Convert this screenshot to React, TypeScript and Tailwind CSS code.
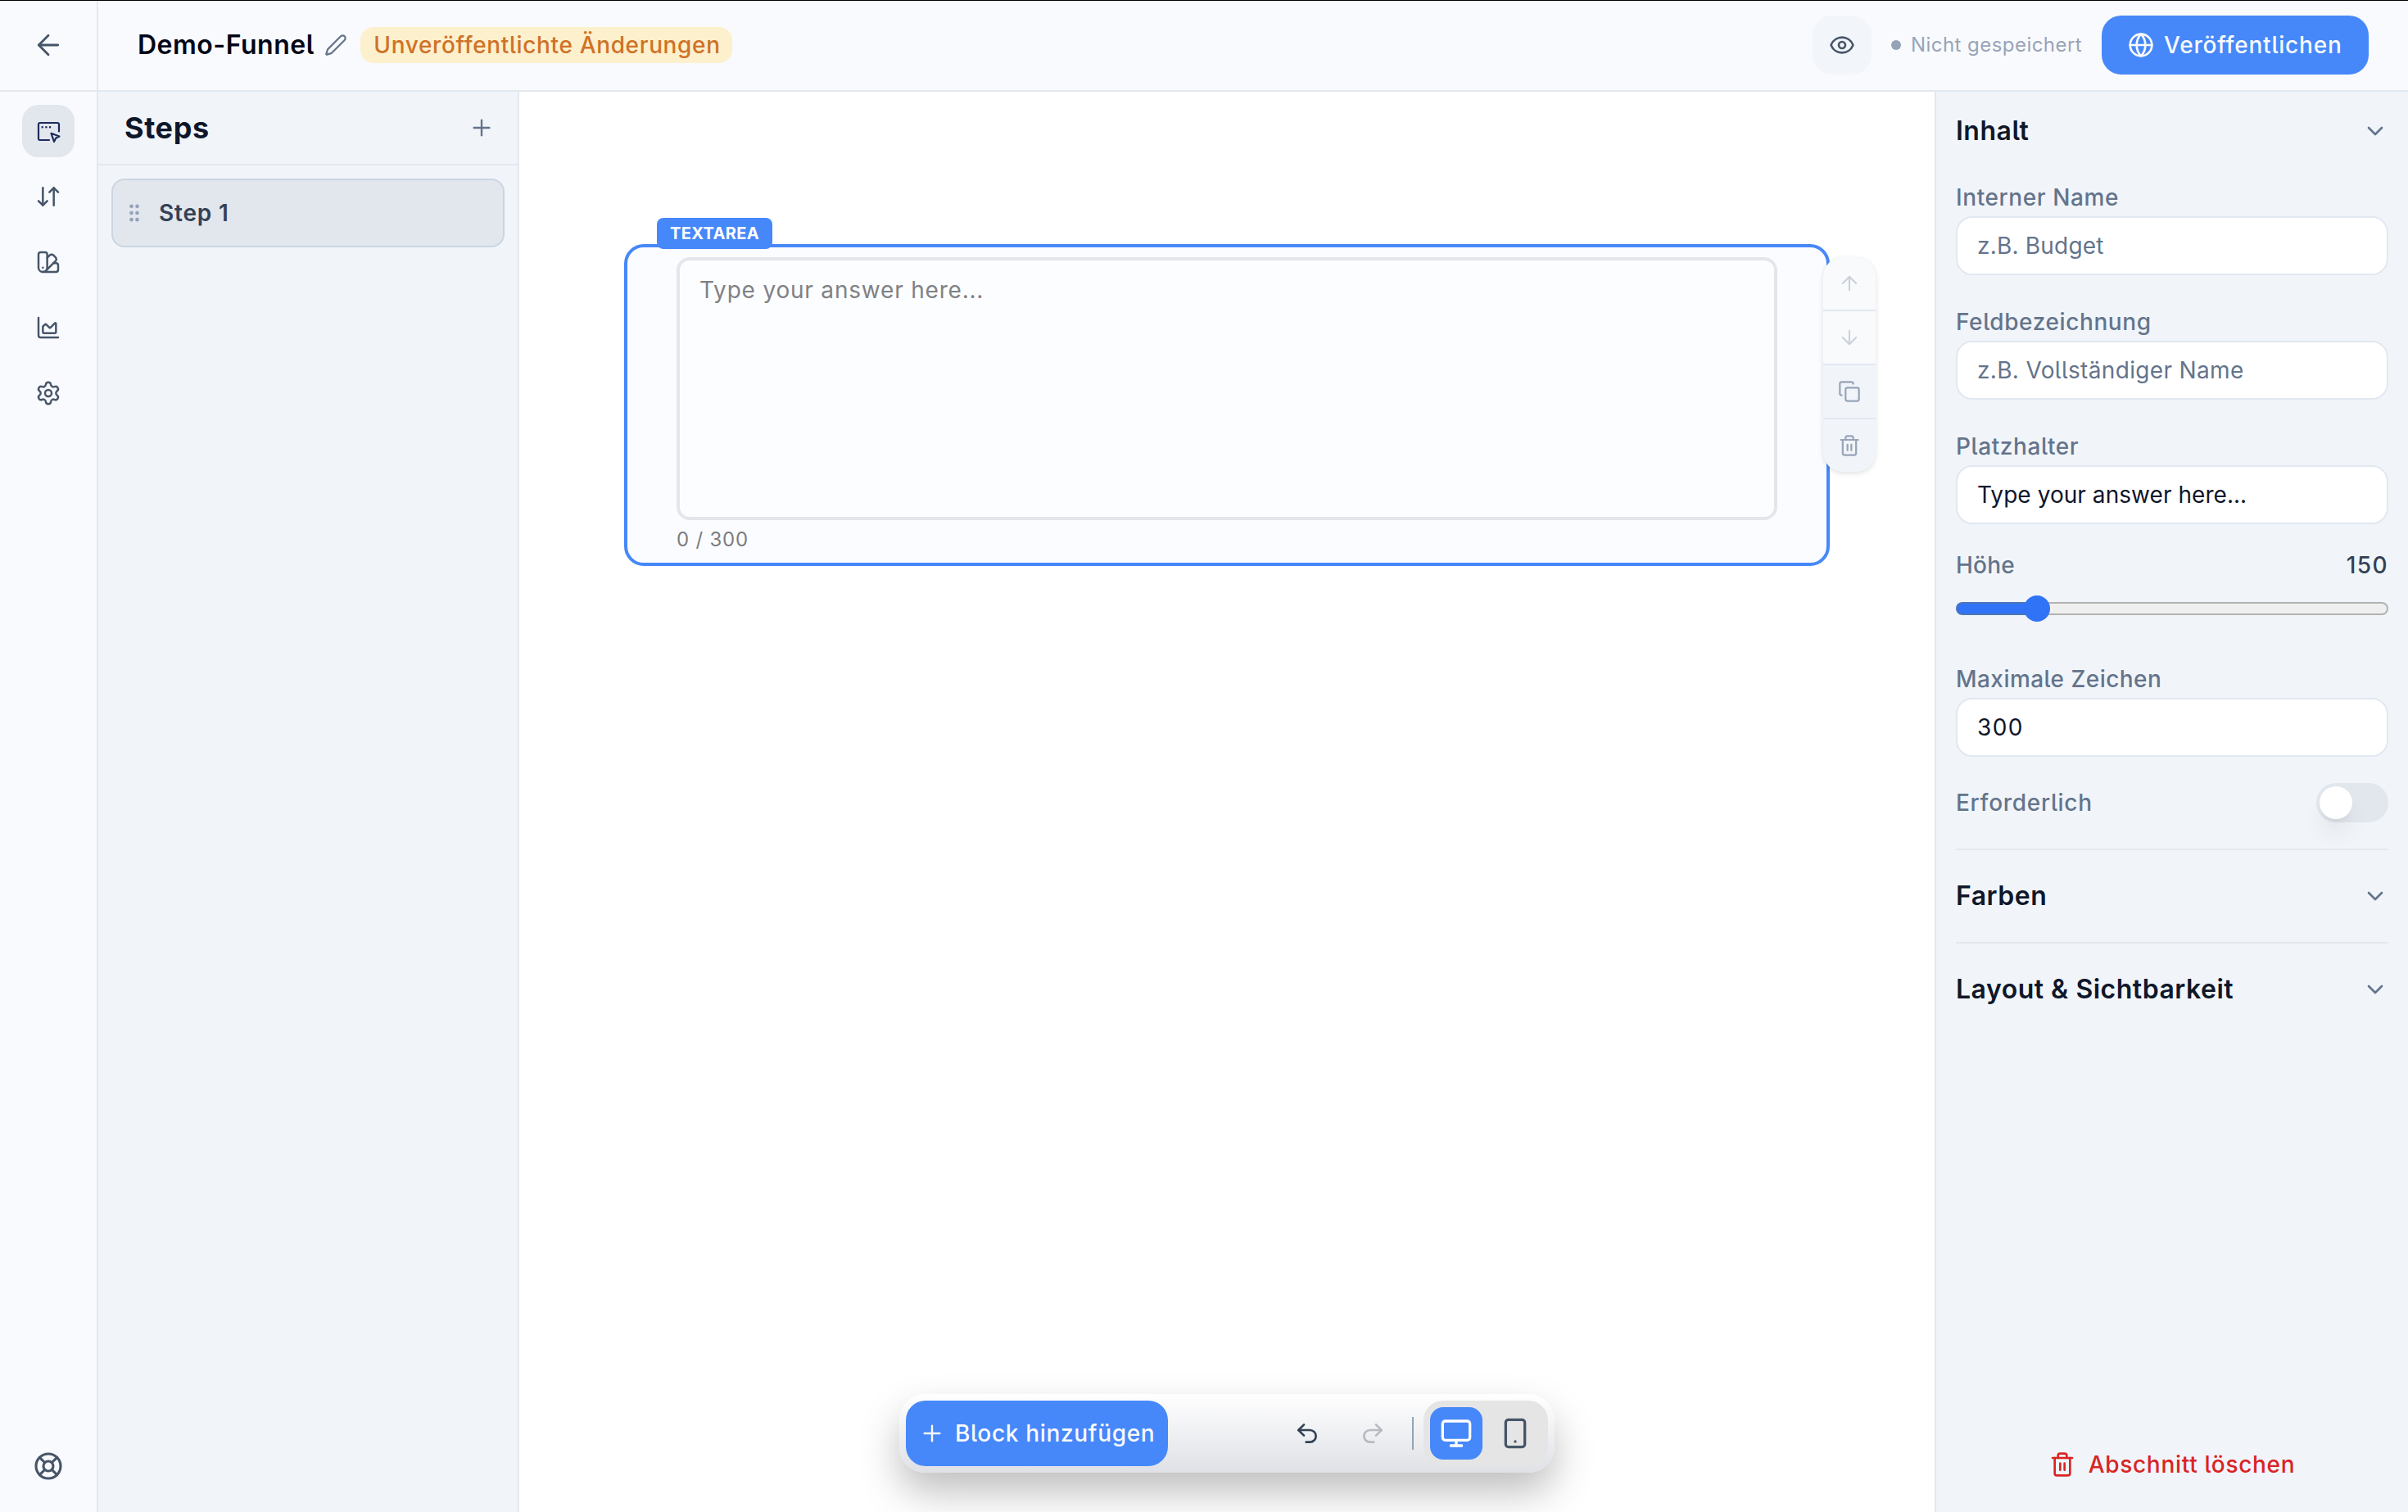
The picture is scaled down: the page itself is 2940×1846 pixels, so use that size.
import type { ReactNode } from "react";
import {
  ArrowDown,
  ArrowDownUp,
  ArrowLeft,
  ArrowUp,
  ChartArea,
  ChevronDown,
  Copy,
  Eye,
  Globe,
  GripVertical,
  LifeBuoy,
  Monitor,
  Plus,
  Redo2,
  Settings,
  Smartphone,
  SwatchBook,
  Trash2,
  Undo2,
} from "lucide-react";
import { clsx } from "clsx";

function PencilIcon() {
  return (
    <svg width="28" height="28" viewBox="0 0 24 24" fill="none" stroke="#64748b" strokeWidth="1.9" strokeLinejoin="round" className="shrink-0">
      <path d="M21.174 6.812a1 1 0 0 0-3.986-3.987L3.842 16.174a2 2 0 0 0-.5.83l-1.321 4.352a.5.5 0 0 0 .623.622l4.353-1.32a2 2 0 0 0 .83-.497z" />
    </svg>
  );
}

function BuilderIcon() {
  return (
    <svg width="32" height="32" viewBox="0 0 32 32" fill="none" stroke="#1e2b5c" strokeWidth="2.2" strokeLinecap="round" strokeLinejoin="round">
      <path d="M17 27H5.8A1.8 1.8 0 0 1 4 25.2V7.8A1.8 1.8 0 0 1 5.8 6H27.2A1.8 1.8 0 0 1 29 7.8V16.5" />
      <path d="M19.5 18.8 29.5 22.5 25.3 24.6 23 29Z" />
      <path d="M8.7 11.2h.01M13.4 11.2h.01M18 11.2h.01" strokeWidth="2.5" />
    </svg>
  );
}

interface NavItem {
  id: string;
  icon: ReactNode;
}

const navItems: NavItem[] = [
  { id: "builder", icon: <BuilderIcon /> },
  { id: "flow", icon: <ArrowDownUp size={32} strokeWidth={1.9} /> },
  { id: "design", icon: <SwatchBook size={32} strokeWidth={1.85} /> },
  { id: "analytics", icon: <ChartArea size={32} strokeWidth={1.85} /> },
  { id: "settings", icon: <Settings size={32} strokeWidth={1.85} /> },
];

function Header() {
  return (
    <header className="flex h-[112px] shrink-0 border-t border-b-2 border-t-black border-b-[#e2e8f0] bg-[#f9fafd]">
      <div className="flex w-[120px] items-center justify-center border-r-2 border-[#e2e8f0] pb-px">
        <ArrowLeft size={40} strokeWidth={1.7} className="text-[#475569]" />
      </div>
      <div className="flex flex-1 items-center pr-12 pb-px pl-12">
        <h1 className="w-[218px] text-[32px] font-semibold tracking-[0.5px] whitespace-nowrap text-[#020617]">Demo-Funnel</h1>
        <div className="mr-4 ml-[10px]">
          <PencilIcon />
        </div>
        <span className="flex h-11 w-[454px] items-center justify-center rounded-2xl bg-[#fcf0cd] pl-0.5 text-[28px] font-medium tracking-[0.64px] text-[#cf7227]">
          Unveröffentlichte Änderungen
        </span>
        <button className="ml-auto flex size-[72px] items-center justify-center rounded-3xl bg-[#f2f5fa] text-[#475569]">
          <Eye size={32} strokeWidth={2} />
        </button>
        <span className="mr-3 ml-6 size-3 rounded-full bg-[#94a3b8]" />
        <span className="w-[233px] text-[24px] tracking-[0.45px] text-[#98a4b8]">Nicht gespeichert</span>
        <button className="flex h-[72px] w-[326px] items-center gap-3 rounded-3xl bg-[#4688f9] pl-8 text-[28px] font-medium tracking-[0.8px] text-[#f8fafc]">
          <Globe size={32} strokeWidth={2} className="shrink-0" />
          Veröffentlichen
        </button>
      </div>
    </header>
  );
}

function NavRail() {
  return (
    <nav className="flex w-[120px] shrink-0 flex-col items-center gap-4 border-r-2 border-[#e2e8f0] bg-[#f9fafd] pt-4 pb-6 text-[#475569]">
      {navItems.map((item, index) => (
        <button
          key={item.id}
          className={clsx("flex size-16 items-center justify-center rounded-[20px]", index === 0 && "bg-[#e2e7ee]")}
        >
          {item.icon}
        </button>
      ))}
      <button className="mt-auto flex size-16 items-center justify-center">
        <LifeBuoy size={36} strokeWidth={2.1} />
      </button>
    </nav>
  );
}

function StepsPanel() {
  return (
    <aside className="w-[514px] shrink-0 border-r-2 border-[#e2e8f0] bg-[#f1f5fa]">
      <div className="flex h-[90px] items-center justify-between border-b-2 border-[#e2e8f0] pr-7 pl-8">
        <h2 className="pb-px text-[36px] font-bold tracking-[0.6px] text-[#0f172a]">Steps</h2>
        <Plus size={32} strokeWidth={1.8} className="text-[#64748b]" />
      </div>
      <div className="p-4">
        <div className="flex h-[84px] items-center rounded-2xl border-2 border-[#cbd5e1] bg-[#e2e7ee] pl-3">
          <GripVertical size={28} strokeWidth={2} className="text-[#94a3b8]" />
          <span className="ml-4 text-[28px] font-semibold tracking-[0.8px] text-[#334155]">Step 1</span>
        </div>
      </div>
    </aside>
  );
}

function BlockActions() {
  return (
    <div className="absolute top-3 -right-[60px] flex w-16 flex-col gap-0.5 overflow-hidden rounded-3xl bg-[#e2e8f0] text-[#98a4b8] shadow-[0_2px_6px_rgba(0,0,0,0.12)]">
      <button className="flex h-16 items-center justify-center bg-[#f9fafc] text-[#cad1dc]">
        <ArrowUp size={28} strokeWidth={1.8} />
      </button>
      <button className="flex h-16 items-center justify-center bg-[#f9fafc] text-[#cad1dc]">
        <ArrowDown size={28} strokeWidth={1.8} />
      </button>
      <button className="flex h-16 items-center justify-center bg-[#f1f5fa]">
        <Copy size={28} strokeWidth={1.9} />
      </button>
      <button className="flex h-16 items-center justify-center bg-[#f1f5fa]">
        <Trash2 size={28} strokeWidth={1.9} />
      </button>
    </div>
  );
}

function Toolbar() {
  return (
    <div className="absolute bottom-12 left-1/2 flex h-24 w-[800px] -translate-x-1/2 items-center rounded-[32px] bg-linear-to-b from-white to-[#dfe1e6] px-2 shadow-[0_24px_48px_rgba(0,0,0,0.25)]">
      <button className="flex h-20 w-80 items-center gap-3 rounded-3xl bg-[#4688f9] pl-4 text-[28px] font-medium tracking-[0.68px] text-[#f8fafc]">
        <Plus size={32} strokeWidth={1.8} className="shrink-0" />
        Block hinzufügen
      </button>
      <div className="ml-auto flex items-center">
        <button className="flex size-16 items-center justify-center text-[#334155]">
          <Undo2 size={32} strokeWidth={2} />
        </button>
        <button className="ml-4 flex size-16 items-center justify-center text-[#b7bac2]">
          <Redo2 size={32} strokeWidth={2} />
        </button>
        <div className="mr-3 ml-4 h-10 w-0.5 bg-[#94a3b8]" />
        <div className="flex h-20 w-[152px] items-center gap-2 rounded-3xl bg-[#e5e5e5] px-2">
          <button className="flex size-16 items-center justify-center rounded-2xl bg-[#4688f9] text-white">
            <Monitor size={40} strokeWidth={2} />
          </button>
          <button className="flex size-16 items-center justify-center text-[#475569]">
            <Smartphone size={40} strokeWidth={2} />
          </button>
        </div>
      </div>
    </div>
  );
}

function Canvas() {
  return (
    <main className="relative flex-1 bg-white">
      <div className="relative mx-32 mt-[186px] h-[393px] rounded-3xl border-4 border-[#4688f9] bg-[#fbfcff] px-[60px] pt-3">
        <span className="absolute -top-9 left-9 flex h-[38px] w-[141px] items-center justify-center rounded-lg bg-[#4688f9] text-[20px] font-bold tracking-[0.35px] text-white">
          TEXTAREA
        </span>
        <div className="h-[321px] rounded-2xl border-4 border-[#e4e6eb] bg-[#fcfdff] px-6 pt-4 text-[28px] leading-10 tracking-[0.8px] text-[#808184]">
          Type your answer here...
        </div>
        <p className="mt-2 text-[24px] leading-8 tracking-[0.8px] text-[#7b7c7e]">0 / 300</p>
        <BlockActions />
      </div>
      <Toolbar />
    </main>
  );
}

function Field({ label, children }: { label: string; children: ReactNode }) {
  return (
    <div>
      <div className="mb-0.5 flex h-[42px] items-center text-[28px] font-medium text-[#64748b]">{label}</div>
      <div className="flex h-[72px] items-center rounded-[20px] border-2 border-[#e2e8f0] bg-white px-6 text-[28px] text-[#0f172a]">
        {children}
      </div>
    </div>
  );
}

function SectionTitle({ title }: { title: string }) {
  return (
    <div className="flex items-center justify-between">
      <h3 className="text-[32px] leading-10 font-semibold tracking-[0.5px] text-[#0f172a]">{title}</h3>
      <ChevronDown size={32} strokeWidth={2} className="text-[#64748b]" />
    </div>
  );
}

function PropertiesPanel() {
  return (
    <aside className="flex w-[578px] shrink-0 flex-col border-l-2 border-[#e2e8f0] bg-[#f1f5fa] px-6 pb-[26px]">
      <div className="pt-7 pb-10">
        <SectionTitle title="Inhalt" />
      </div>
      <div className="flex flex-col gap-9 tracking-[0.6px]">
        <Field label="Interner Name">
          <span className="tracking-[0.2px] text-[#64748b]">z.B. Budget</span>
        </Field>
        <Field label="Feldbezeichnung">
          <span className="tracking-[0.34px] text-[#64748b]">z.B. Vollständiger Name</span>
        </Field>
        <Field label="Platzhalter">
          <span className="tracking-[0.05px]">Type your answer here...</span>
        </Field>
      </div>

      <div className="mt-[30px] flex h-10 items-center justify-between text-[28px] font-medium">
        <span className="tracking-[0.2px] text-[#64748b]">Höhe</span>
        <span className="tracking-[1.4px] text-[#334155]">150</span>
      </div>
      {/* Height slider */}
      <div className="mt-[17px] flex h-8 items-center">
        <div className="h-4 w-[99px] rounded-l-full border-2 border-r-0 border-[#4a76b8] bg-[#3173f6]" />
        <div className="z-10 -mx-4 size-8 shrink-0 rounded-full bg-[#3173f6]" />
        <div className="h-4 flex-1 rounded-r-full border-2 border-l-0 border-[#b2b2b2] bg-[#efefef]" />
      </div>

      <div className="mt-[49px] tracking-[0.45px]">
        <Field label="Maximale Zeichen">
          <span className="tracking-[1.4px]">300</span>
        </Field>
      </div>

      <div className="mt-8 flex h-12 items-center justify-between">
        <span className="text-[28px] font-medium tracking-[0.7px] text-[#64748b]">Erforderlich</span>
        <div className="flex h-12 w-[88px] items-center rounded-full bg-[#e2e7ee] px-1">
          <div className="size-10 rounded-full bg-white shadow-[0_20px_30px_-6px_rgba(0,0,0,0.1),0_8px_12px_-8px_rgba(0,0,0,0.1)]" />
        </div>
      </div>

      <div className="mt-8 flex h-[114px] flex-col justify-center border-t-2 border-[#e2e8f0]">
        <SectionTitle title="Farben" />
      </div>
      <div className="flex h-[114px] flex-col justify-center border-t-2 border-[#e2e8f0]">
        <SectionTitle title="Layout & Sichtbarkeit" />
      </div>

      <button className="mt-auto flex h-16 items-center justify-center gap-4 text-[28px] font-medium tracking-[0.7px] text-[#d92424]">
        <Trash2 size={32} strokeWidth={2} />
        Abschnitt löschen
      </button>
    </aside>
  );
}

export default function App() {
  return (
    <div className="flex h-[1846px] w-[2940px] flex-col overflow-hidden bg-white font-[Inter,sans-serif] [font-feature-settings:'cv05']">
      <Header />
      <div className="flex min-h-0 flex-1">
        <NavRail />
        <StepsPanel />
        <Canvas />
        <PropertiesPanel />
      </div>
    </div>
  );
}
